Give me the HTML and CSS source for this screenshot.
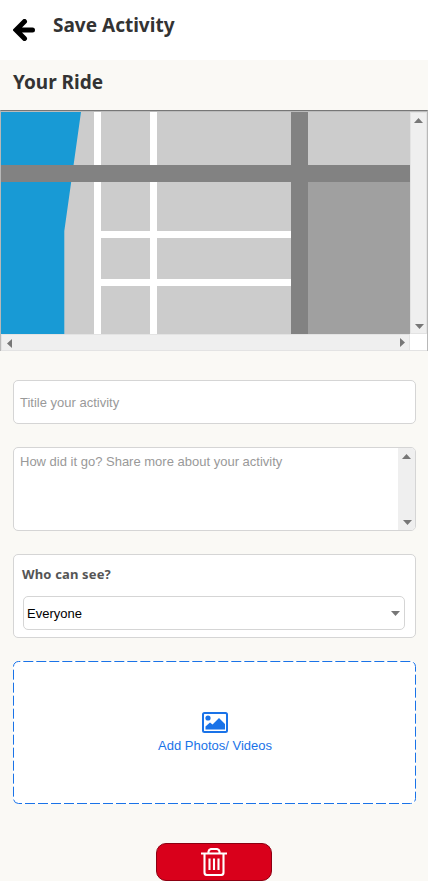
FILE: index.html
```html
<!DOCTYPE html>
<html lang="en">
<head>
<meta charset="utf-8">
<title>Save Activity</title>
<link rel="stylesheet" href="styles.css">
</head>
<body>
<header class="topbar">
  <svg class="back" width="22" height="22" viewBox="0 0 22 22"><path d="M11.500 2.500 3 11l8.500 8.500M4 11h15.500"/></svg>
  <h1>Save Activity</h1>
</header>
<main>
  <h2>Your Ride</h2>
  <section class="map-frame">
    <svg class="map" width="409" height="222" viewBox="0 0 409 222">
      <path fill="#ccc" d="M0 0h409v222H0z"/>
      <path fill="#189ad5" d="M0 0h80L63.300 119v103H0z"/>
      <path fill="#fff" d="M93 0h7v222h-7zM149 0h7v222h-7zM93 119h197v7H93zM93 167h197v7H93z"/>
      <path fill="#a0a0a0" d="M307 70h102v152H307z"/>
      <path fill="#828282" d="M0 53h409v17H0zM290 0h17v222h-17z"/>
    </svg>
    <div class="bar bar-v">
      <svg width="9" height="5"><path d="M4.500 0 9 5H0z"/></svg>
      <svg width="9" height="5"><path d="M0 0h9L4.500 5z"/></svg>
    </div>
    <div class="bar bar-h">
      <svg width="5" height="9"><path d="M5 0v9L0 4.500z"/></svg>
      <svg width="5" height="9"><path d="M0 0v9l5-4.500z"/></svg>
    </div>
    <div class="corner"></div>
  </section>
  <form class="form">
    <div class="box title-field">Titile your activity</div>
    <div class="box notes">
      <p>How did it go? Share more about your activity</p>
      <div class="notes-bar">
        <svg width="9" height="5"><path d="M4.500 0 9 5H0z"/></svg>
        <svg width="9" height="5"><path d="M0 0h9L4.500 5z"/></svg>
      </div>
    </div>
    <div class="box privacy">
      <h3>Who can see?</h3>
      <div class="box select"><span>Everyone</span><svg width="9" height="5"><path d="M0 0h9L4.500 5z"/></svg></div>
    </div>
    <div class="upload">
      <svg class="dash" width="403" height="143"><rect x=".5" y=".5" width="402" height="142" rx="5"/></svg>
      <svg width="26" height="21" viewBox="0 0 26 21"><rect x="1" y="1" width="24" height="19" rx="1.500" fill="none" stroke="#1a73e8" stroke-width="2"/><circle cx="6" cy="6" r="2.600" fill="#1a73e8"/><path fill="#1a73e8" d="M3.500 17.500v-3L8 10.500l2.500 2L17 6l6 6v5.500z"/></svg>
      <span>Add Photos/ Videos</span>
    </div>
    <div class="delete">
      <svg width="26" height="28" viewBox="0 0 26 28"><path d="M0 5.500h26M7.500 5V3.500Q8 1 10.500 1h5Q18 1 18.500 3.500V5M3.500 6v18.500Q3.500 27 6 27h14q2.500 0 2.500-2.500V6M8.500 10.500v11.500M13 10.500v11.500M17.500 10.500v11.500"/></svg>
    </div>
  </form>
</main>
</body>
</html>
```
FILE: styles.css
```css
* { box-sizing: border-box; }
body {
  margin: 0;
  height: 881px;
  overflow: hidden;
  background: #faf9f5;
  font: 13px/15px "Liberation Sans", Arial, sans-serif;
}
svg { display: block; flex: none; }
h1, h2, h3, p { margin: 0; }
h1, h2, h3 { font-family: "Noto Sans", "Open Sans", sans-serif; font-weight: 700; }
h1, h2 { font-size: 19px; line-height: 26px; color: #333; }
.topbar { display: flex; height: 60px; padding: 12px 13px 0; background: #fff; }
.back { margin: 7px 18px 0 0; fill: none; stroke: #000; stroke-width: 5; stroke-linecap: round; }
h2 { height: 50px; padding: 9px 13px 0; }
.map-frame {
  display: grid;
  grid-template-columns: 409px 17px;
  grid-template-rows: 222px 17px;
  height: 241px;
  border: 1px solid #b8b8b8;
  border-top: 1px solid #777;
  border-bottom: 0;
  padding-top: 1px;
  background: linear-gradient(#bbb 1px, #fff 1px);
}
.bar { display: flex; justify-content: space-between; background: #efefef; border: 1px solid #e3e3e3; fill: #777; }
.bar-v { flex-direction: column; padding: 5px 3px 4px; }
.bar-v svg:last-child { margin-left: 1px; }
.bar-h { padding: 4px 4px 0 5px; }
.bar-h svg:last-child { margin-top: -1px; }
.corner { border-bottom: 1px solid #e3e3e3; }
.form { padding: 29px 12px 0 13px; display: flex; flex-direction: column; }
.box { background: #fff; border: 1px solid #d5d5d5; border-radius: 5px; }
.title-field { height: 44px; padding: 14px 6px; color: #999; }
.notes { display: flex; justify-content: space-between; height: 84px; margin-top: 23px; color: #999; overflow: hidden; }
.notes p { padding: 6px; }
.notes-bar { width: 17px; display: flex; flex-direction: column; justify-content: space-between; padding: 6px 4px 5px; background: #efefef; fill: #777; }
.notes-bar svg:last-child { margin-left: 1px; }
.privacy { height: 84px; margin-top: 23px; padding: 10px 10px 0 9px; }
h3 { font-size: 13px; line-height: 18px; letter-spacing: .15px; color: #555; margin-left: -1px; }
.select { display: flex; align-items: center; justify-content: space-between; height: 34px; margin-top: 13px; padding: 0 4px 0 3px; color: #000; }
.select svg { fill: #777; }
.upload { position: relative; display: flex; flex-direction: column; align-items: center; height: 143px; margin-top: 23px; padding-top: 51px; background: #fff; border-radius: 5px; color: #1a73e8; }
.dash { position: absolute; inset: 0; fill: none; stroke: #1a73e8; stroke-dasharray: 10 3; stroke-dashoffset: 8.2; }
.upload span { margin: 5px 0 0 1px; }
.delete { display: flex; justify-content: center; width: 116px; height: 38px; margin: 39px 0 0 143px; padding-top: 4px; background: #d9001b; border: 1px solid #8c0012; border-radius: 10px; }
.delete svg { fill: none; stroke: #fff; stroke-width: 2.100; }
```
